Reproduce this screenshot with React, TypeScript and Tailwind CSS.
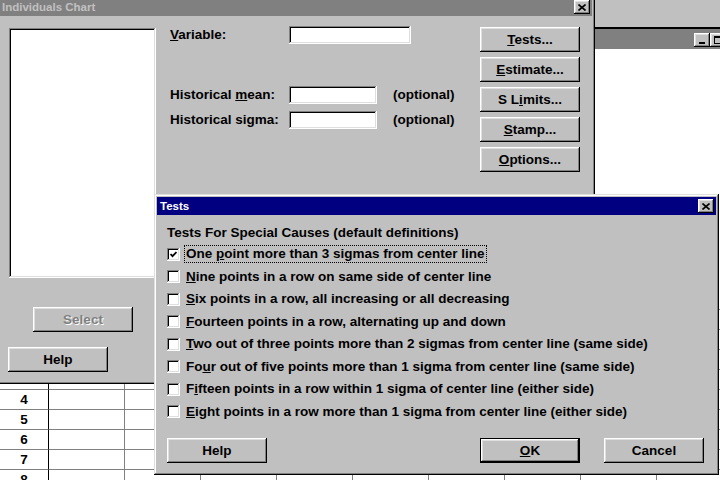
const raised =
  'shadow-[inset_-1px_-1px_0_#000,inset_1px_1px_0_#fff,inset_-2px_-2px_0_#808080,inset_2px_2px_0_#dfdfdf]';
const frame =
  'shadow-[inset_-1px_-1px_0_#000,inset_1px_1px_0_#dfdfdf,inset_-2px_-2px_0_#808080,inset_2px_2px_0_#fff]';
const sunken =
  'shadow-[inset_-1px_-1px_0_#fff,inset_1px_1px_0_#808080,inset_-2px_-2px_0_#dfdfdf,inset_2px_2px_0_#000]';

interface TestRow {
  pre: string;
  key: string;
  post: string;
  checked?: boolean;
}

const tests: TestRow[] = [
  { pre: 'One ', key: 'p', post: 'oint more than 3 sigmas from center line', checked: true },
  { pre: '', key: 'N', post: 'ine points in a row on same side of center line' },
  { pre: '', key: 'S', post: 'ix points in a row, all increasing or all decreasing' },
  { pre: '', key: 'F', post: 'ourteen points in a row, alternating up and down' },
  { pre: '', key: 'T', post: 'wo out of three points more than 2 sigmas from center line (same side)' },
  { pre: 'Fo', key: 'u', post: 'r out of five points more than 1 sigma from center line (same side)' },
  { pre: 'F', key: 'i', post: 'fteen points in a row within 1 sigma of center line (either side)' },
  { pre: '', key: 'E', post: 'ight points in a row more than 1 sigma from center line (either side)' },
];

const rowNumbers = [1, 2, 3, 4, 5, 6, 7, 8];
const columns = [1, 2, 3, 4, 5, 6, 7, 8, 9];

function CloseBox() {
  return (
    <div className={`w-[16px] h-[14px] bg-[#c0c0c0] flex items-center justify-center ${raised}`}>
      <svg width="8" height="7" viewBox="0 0 8 7">
        <path d="M0.5 0.5 L7.5 6.5 M7.5 0.5 L0.5 6.5" stroke="#000" strokeWidth="1.6" fill="none" />
      </svg>
    </div>
  );
}

function Btn({
  children,
  className = '',
  isDefault = false,
  disabled = false,
}: {
  children: React.ReactNode;
  className?: string;
  isDefault?: boolean;
  disabled?: boolean;
}) {
  return (
    <div
      className={`w-[100px] h-[25px] bg-[#c0c0c0] ${isDefault ? 'border border-black' : ''} ${className}`}
    >
      <div
        className={`w-full h-full flex items-center justify-center text-[13.5px] font-bold ${raised} ${
          disabled ? 'text-[#808080] [text-shadow:1px_1px_0_#fff]' : 'text-black'
        }`}
      >
        <span>{children}</span>
      </div>
    </div>
  );
}

function Field({ width }: { width: string }) {
  return <div className={`h-[18px] bg-white ${width} ${sunken}`} />;
}

function Checkbox({ checked }: { checked?: boolean }) {
  return (
    <div className={`w-[13px] h-[13px] shrink-0 bg-white flex items-center justify-center ${sunken}`}>
      {checked && (
        <svg width="7" height="7" viewBox="0 0 7 7">
          <path d="M0.5 3 L2.5 5.2 L6.5 1" stroke="#000" strokeWidth="1.8" fill="none" />
        </svg>
      )}
    </div>
  );
}

export default function App() {
  return (
    <div className="relative w-[720px] h-[480px] overflow-hidden bg-[#c0c0c0] font-['Liberation_Sans',Arial,sans-serif] text-black leading-[18px]">
      {/* Worksheet window behind the dialogs */}
      <div className="absolute left-0 right-0 top-[27px] bottom-0 border-t-2 border-black bg-white flex flex-col">
        <div className="h-[20px] shrink-0 bg-[#808080] flex items-start justify-end pt-[4px]">
          <div className={`w-[16px] h-[14px] bg-[#c0c0c0] flex items-end justify-center pb-[3px] ${raised}`}>
            <div className="w-[6px] h-[2px] bg-black" />
          </div>
          <div className={`w-[16px] h-[14px] mr-[-6px] bg-[#c0c0c0] flex items-center justify-center ${raised}`}>
            <div className="w-[9px] h-[8px] border border-black border-t-2" />
          </div>
        </div>
        <div className="h-[241px] shrink-0" />
        <div className="flex flex-col">
          {['', 'name', ...rowNumbers].map((r, i) => (
            <div key={i} className="flex h-[20px] shrink-0">
              <div className="w-[49px] shrink-0 border-r border-b border-r-black border-b-[#808080] flex items-center justify-center text-[13.5px] font-bold">
                {typeof r === 'number' ? r : ''}
              </div>
              {columns.map(c => (
                <div key={c} className="w-[76px] shrink-0 border-r border-b border-[#808080]" />
              ))}
            </div>
          ))}
        </div>
      </div>

      {/* Individuals Chart dialog (inactive) */}
      <div className={`absolute left-[-3px] top-[-5px] w-[598px] h-[389px] bg-[#c0c0c0] p-[3px] ${frame}`}>
        <div className="h-[18px] bg-[#808080] flex items-center justify-between pl-[2px] pr-[2px]">
          <span className="text-[11.5px] font-bold text-[#c0c0c0]">Individuals Chart</span>
          <CloseBox />
        </div>

        <div className="flex items-start pl-[8px] pt-[10px]">
          {/* Variable list */}
          <div className="flex flex-col w-[148px] shrink-0">
            <div className={`ml-[1px] mt-[2px] w-[147px] h-[250px] bg-white ${sunken}`} />
            <Btn disabled className="ml-[25px] mt-[29px]">
              Select
            </Btn>
            <Btn className="mt-[15px]">Help</Btn>
          </div>

          {/* Fields */}
          <div className="ml-[14px] w-[310px] shrink-0 flex flex-col text-[13.5px] font-bold">
            <div className="flex items-center h-[18px]">
              <span className="w-[119px]">
                <u>V</u>ariable:
              </span>
              <Field width="w-[122px]" />
            </div>
            <div className="flex items-center h-[18px] mt-[42px]">
              <span className="w-[119px]">
                Historical <u>m</u>ean:
              </span>
              <Field width="w-[88px]" />
              <span className="ml-[16px]">(optional)</span>
            </div>
            <div className="flex items-center h-[18px] mt-[7px]">
              <span className="w-[119px]">Historical sigma:</span>
              <Field width="w-[88px]" />
              <span className="ml-[16px]">(optional)</span>
            </div>
          </div>

          {/* Sub-dialog buttons */}
          <div className="mt-[1px] flex flex-col gap-[5px]">
            <Btn>
              <u>T</u>ests...
            </Btn>
            <Btn>
              <u>E</u>stimate...
            </Btn>
            <Btn>
              S L<u>i</u>mits...
            </Btn>
            <Btn>
              <u>S</u>tamp...
            </Btn>
            <Btn>
              <u>O</u>ptions...
            </Btn>
          </div>
        </div>
      </div>

      {/* Tests dialog (active) */}
      <div className={`absolute left-[154px] top-[194px] w-[565px] h-[281px] bg-[#c0c0c0] p-[3px] ${frame}`}>
        <div className="h-[18px] bg-[#000080] flex items-center justify-between pl-[3px] pr-[2px]">
          <span className="text-[11.5px] font-bold text-white">Tests</span>
          <CloseBox />
        </div>

        <div className="px-[10px] text-[13.5px] font-bold">
          <p className="mt-[9px] h-[18px] leading-[18px]">Tests For Special Causes (default definitions)</p>
          <div className="flex flex-col mt-[1px]">
            {tests.map((t, i) => (
              <div key={i} className="h-[22.5px] flex items-center">
                <Checkbox checked={t.checked} />
                <span
                  className={`ml-[4px] h-[18px] px-[1px] leading-[16px] border border-dotted whitespace-pre ${
                    i === 0 ? 'border-black' : 'border-transparent'
                  }`}
                >
                  {t.pre}
                  <u>{t.key}</u>
                  {t.post}
                </span>
              </div>
            ))}
          </div>
          <div className="flex mt-[15px]">
            <Btn>Help</Btn>
            <Btn isDefault className="ml-[213px]">
              <u>O</u>K
            </Btn>
            <Btn className="ml-[24px]">Cancel</Btn>
          </div>
        </div>
      </div>
    </div>
  );
}
